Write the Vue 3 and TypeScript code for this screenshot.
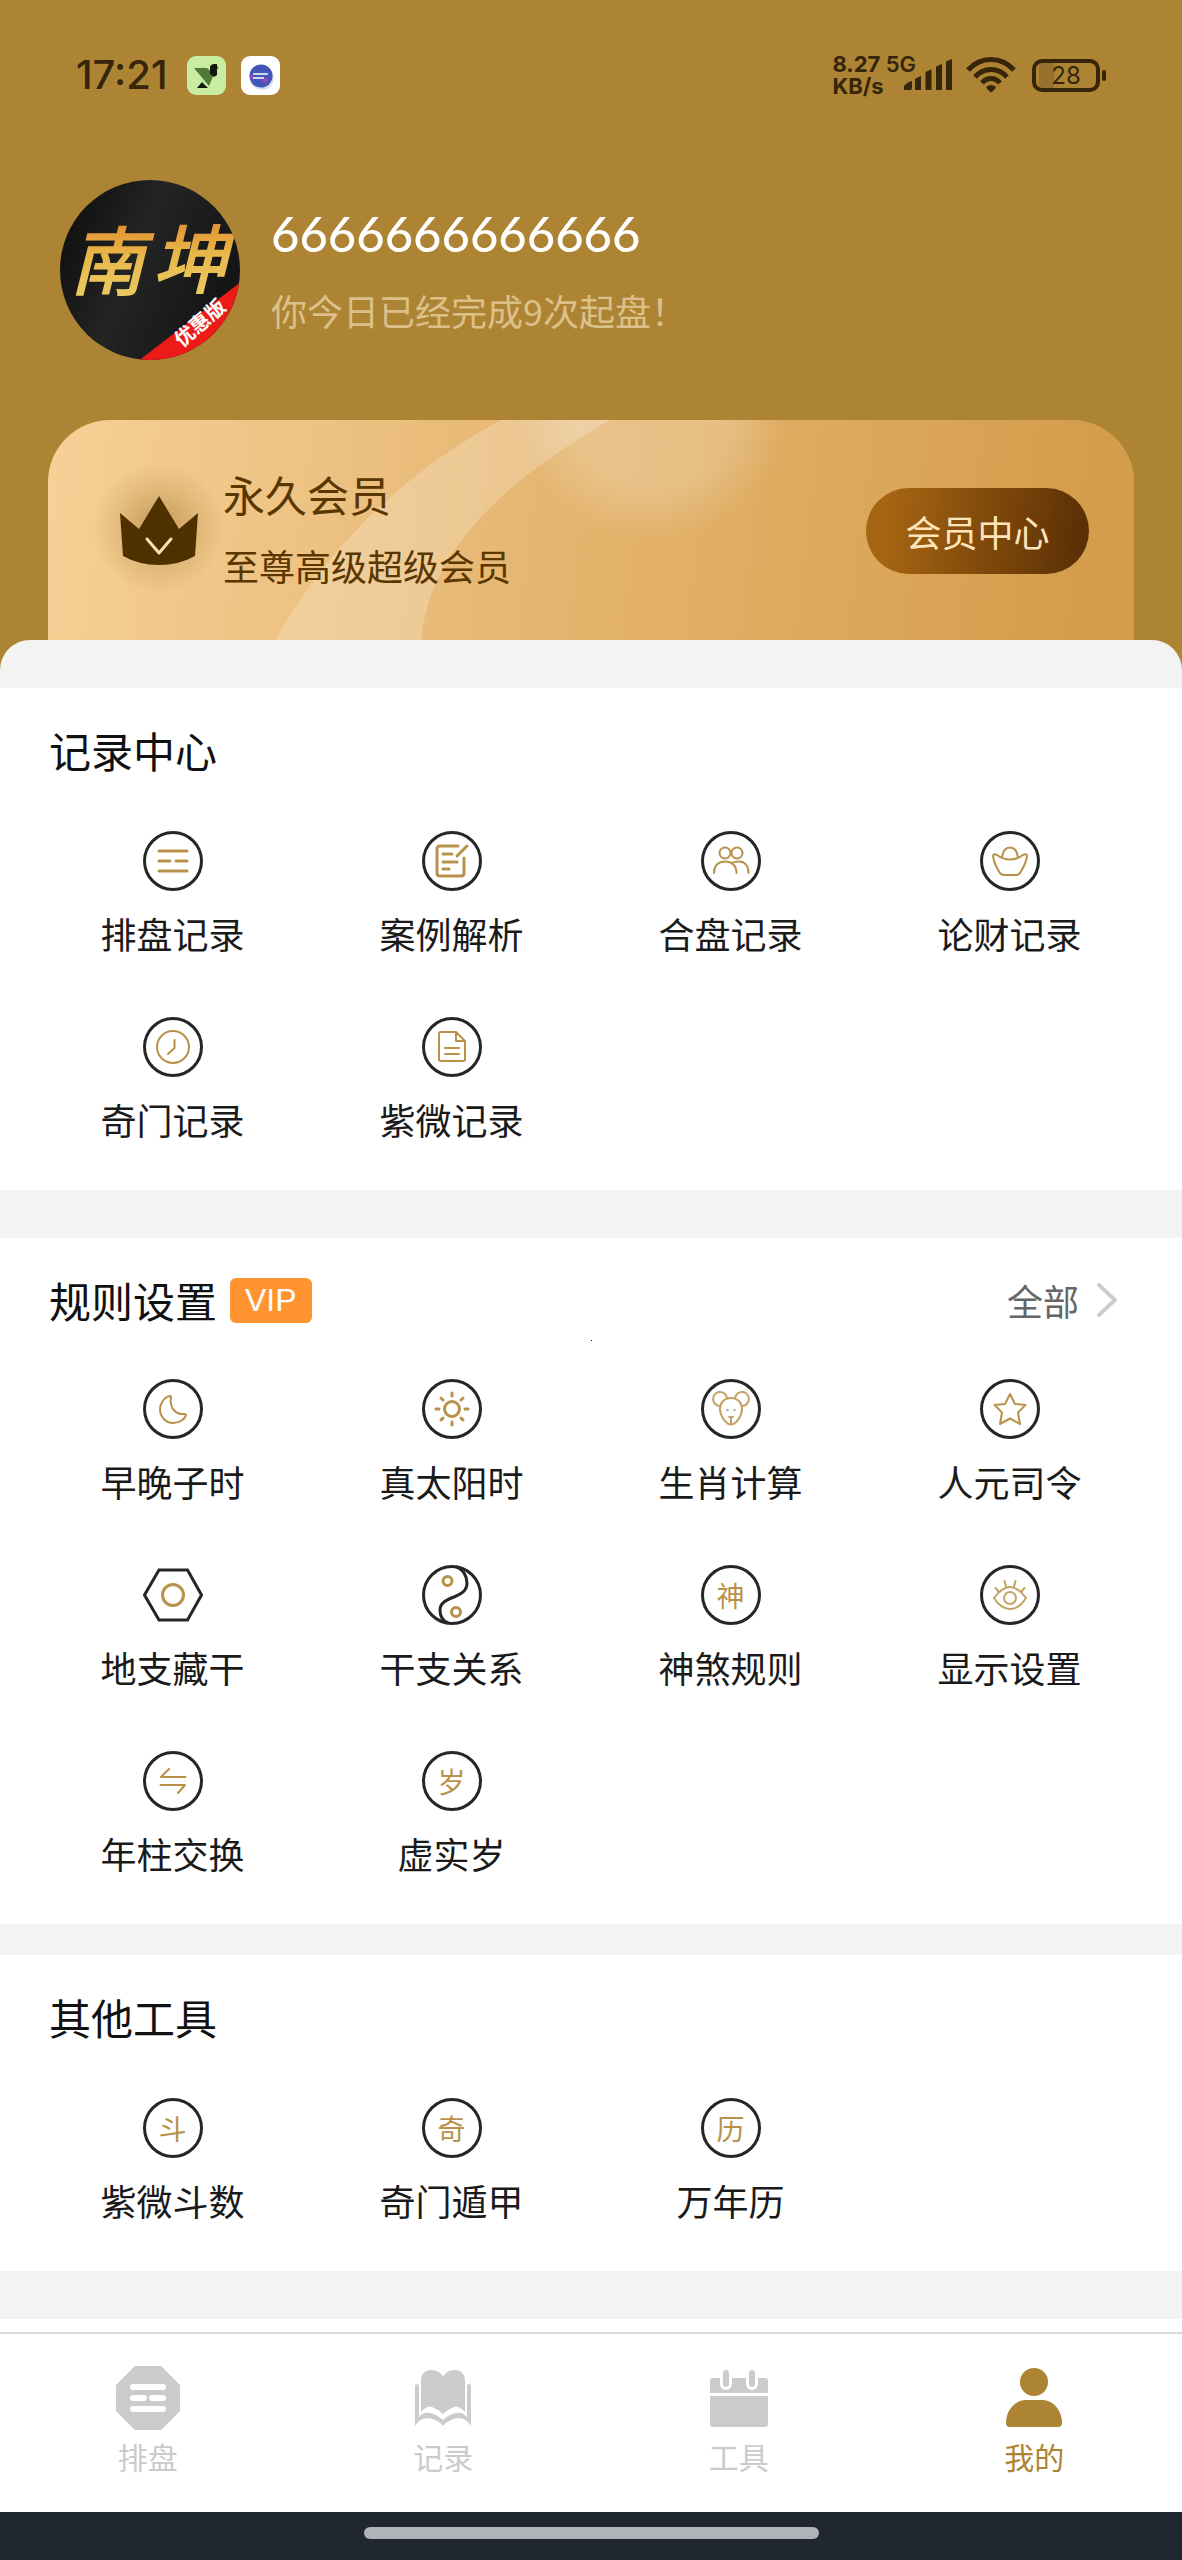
<script setup lang="ts">
interface Entry {
  label: string
  icon?: string
  glyph?: string
}

interface Section {
  title: string
  vip?: boolean
  entries: Entry[]
}

interface Tab {
  label: string
  active?: boolean
  shape: string
}

/* Icon artwork is drawn around the origin; g = gold strokes, k = dark strokes. */
const ring = '<circle class="k" r="28.5"/>'

const icons: Record<string, string> = {
  list: ring + '<path class="g" d="M-14-10H14M-14 0H-3M3 0H14M-14 10H14"/>',
  note:
    ring +
    '<path class="g" d="M6-15H-12Q-15-15-15-12V12Q-15 15-12 15H9Q12 15 12 12V-3M15-15 5-5M-9-7H0M-9 1H5M-9 8H-3"/>',
  people:
    ring +
    '<g class="g mid"><circle cx="-6" cy="-8" r="5.5"/><circle cx="6" cy="-8" r="5.5"/><path d="M-17 12C-17 4-12 .5-6 .5S5.500 4 5.500 12M0 2C3 1 5 .5 8 .5 14 .5 17.500 5 17.500 12"/></g>',
  ingot:
    ring +
    '<path class="g mid" d="M-8-4C-7-10-4-13.500 0-13.500S7-10 8-4M-17-5Q-17-8-13-6C-5 0 5 0 13-6Q17-8 17-5C16 2 12 9 10 12Q9 14 6 14H-6Q-9 14-10 12C-12 9-16 2-17-5Z"/>',
  clock: ring + '<g class="g mid"><circle r="16"/><path d="M1.500-7V1L-5 7"/></g>',
  doc:
    ring +
    '<path class="g mid" d="M4-15H-11Q-13-15-13-13V12Q-13 14-11 14H11Q13 14 13 12V-6ZM4-15V-6H13M-7 1H7M-7 7H7"/>',
  moon:
    ring +
    '<path class="g mid" d="M-3-13C-9-12-13-5-13 0-13 8-7 14 0 14 7 14 12 10 13 6Q13 5 11 5C3 6-4-1-2-12Q-2-13-3-13Z"/>',
  sun:
    ring +
    '<g class="g"><circle r="7.500"/><path d="M0-16V-13M0 16V13M-16 0H-13M16 0H13M-11-11-9-9M11-11 9-9M-11 11-9 9M11 11 9 9"/></g>',
  mouse:
    ring +
    '<g class="g thin"><path d="M-11-3A7 7 0 1 1-4-11M11-3A7 7 0 1 0 4-11M0-11C7-11 11-6 11 0 11 7 5 15.500 0 15.500S-11 7-11 0C-11-6-7-11 0-11ZM-2 8H2M0 8V15"/></g><circle class="eye" cx="-3.500" cy="1" r="1.300"/><circle class="eye" cx="3.500" cy="1" r="1.300"/>',
  star:
    ring +
    '<path class="g mid" d="M0-15 5-5 15.500-4 8 3.500 10 15 0 9.500-10 15-8 3.500-15.500-4-5-5Z"/>',
  hexagon:
    '<path class="k" d="M-14-25H14.500L28.500 0 14.500 25H-14L-28.500 0Z"/><circle class="g" r="10.500"/>',
  yinyang:
    ring +
    '<path class="k" d="M4-28C11-26 15-19 15-12 15-4 9-1 2 2-6 5-12 8-12 15-12 21-9 26-4 28"/><g class="g"><circle cx="-4.500" cy="-14" r="4.500"/><circle cx="4" cy="17" r="4.500"/></g>',
  eye:
    ring +
    '<g class="g thin"><path d="M-16 3C-10-5-5-8 0-8S10-5 16 3C11 11 5 14 0 14S-11 11-16 3ZM-14.500-7-11-3M-5.500-14-4-8.500M5.500-14 4-8.500M14.500-7 11-3"/><circle cy="3" r="6"/></g>',
  swap: ring + '<path class="g mid" d="M-4-12-12-4H12.500M-12.500 4H12L5 12"/>',
}

const sections: Section[] = [
  {
    title: '记录中心',
    entries: [
      { label: '排盘记录', icon: 'list' },
      { label: '案例解析', icon: 'note' },
      { label: '合盘记录', icon: 'people' },
      { label: '论财记录', icon: 'ingot' },
      { label: '奇门记录', icon: 'clock' },
      { label: '紫微记录', icon: 'doc' },
    ],
  },
  {
    title: '规则设置',
    vip: true,
    entries: [
      { label: '早晚子时', icon: 'moon' },
      { label: '真太阳时', icon: 'sun' },
      { label: '生肖计算', icon: 'mouse' },
      { label: '人元司令', icon: 'star' },
      { label: '地支藏干', icon: 'hexagon' },
      { label: '干支关系', icon: 'yinyang' },
      { label: '神煞规则', glyph: '神' },
      { label: '显示设置', icon: 'eye' },
      { label: '年柱交换', icon: 'swap' },
      { label: '虚实岁', glyph: '岁' },
    ],
  },
  {
    title: '其他工具',
    entries: [
      { label: '紫微斗数', glyph: '斗' },
      { label: '奇门遁甲', glyph: '奇' },
      { label: '万年历', glyph: '历' },
    ],
  },
]

const tabs: Tab[] = [
  {
    label: '排盘',
    shape:
      '<path d="M19 0H45L64 19V45L45 64H19L0 45V19Z"/><path class="cut" d="M17 21H47M17 32H28M36 32H47M17 43H47"/>',
  },
  {
    label: '记录',
    shape:
      '<path d="M10 15C10 8 14 4 20 4S30 7 32 11C34 7 38 4 44 4S54 8 54 15V46C50 41 46 40 43 41 38 43 34 46 32 48 30 46 26 43 21 41 18 40 14 41 10 46ZM4 20Q4 18 6 18T8 20V51C11 47 15 46 19 47 25 48 30 52 32 54 34 52 39 48 45 47 49 46 53 47 56 51V20Q56 18 58 18T60 20V60C57 55 53 52 47 52 40 53 35 56 32 60 29 56 24 53 17 52 11 52 7 55 4 60Z"/>',
  },
  {
    label: '工具',
    shape:
      '<path d="M6 12H58Q61 12 61 15V27H3V15Q3 12 6 12ZM3 30H61V58Q61 61 58 61H6Q3 61 3 58Z"/><path class="ring-gap" d="M19 8V18M45 8V18"/><path class="ring-bar" d="M19 7V18M45 7V18"/>',
  },
  {
    label: '我的',
    active: true,
    shape:
      '<circle cx="32" cy="16" r="14"/><path d="M4 57C4 44 13 34 24 34H40C51 34 60 44 60 57Q60 61 56 61H8Q4 61 4 57Z"/>',
  },
]
</script>

<template>
  <div class="page">
    <header class="hero">
      <div class="status">
        <div class="status-left">
          <span class="time">17:21</span>
          <svg class="app-badge" viewBox="0 0 39 39" aria-hidden="true">
            <rect width="39" height="39" rx="9" fill="#c9eda0" />
            <path d="M7 12H20L27 18 22 30Z" fill="#4f7a35" />
            <path d="M23 18V11Q24 8 27 8H30V10L32 13 30 12V19L27 21ZM10 32 15 26 21 32Z" fill="#10180c" />
          </svg>
          <svg class="app-badge" viewBox="0 0 39 39" aria-hidden="true">
            <rect width="39" height="39" rx="9" fill="#fff" />
            <circle cx="21" cy="22" r="12" fill="#dcdcf2" />
            <circle cx="20" cy="20" r="11.500" fill="#4355b8" />
            <circle cx="24" cy="24" r="2.500" fill="#a044b8" />
            <circle cx="11" cy="21" r="2" fill="#a044b8" />
            <path d="M12 18H27M12 22H23" stroke="#fff" stroke-width="1.500" />
          </svg>
        </div>
        <div class="status-right">
          <div class="speed"><span>8.27</span><span>KB/s</span></div>
          <span class="network">5G</span>
          <svg class="signal" viewBox="0 0 48 32" aria-hidden="true">
            <path d="M0 31V27Q3 23 8 22V29Q8 31 6 31ZM11 20Q14 18 17 17V31H11ZM21.500 13Q25 11 27.500 10.500V31H21.500ZM32 7.500Q35 6 38 5V31H32ZM42 2.500Q45 1 48 0V31H42Z" />
          </svg>
          <svg class="wifi" viewBox="0 0 50 36" aria-hidden="true">
            <path d="M2 13C15-1 35-1 48 13M9 20C18 10 32 10 41 20M16 26C21 20 29 20 34 26" />
            <path class="solid" d="M20 30Q25 26 30 30 28 34 25 35.500 22 34 20 30Z" />
          </svg>
          <div class="battery"><span>28</span></div>
        </div>
      </div>

      <div class="profile">
        <svg class="avatar" viewBox="0 0 180 180" role="img" aria-label="头像">
          <defs>
            <clipPath id="avatar-clip"><circle cx="90" cy="90" r="90" /></clipPath>
            <linearGradient id="avatar-bg" x1="0" y1="0" x2="1" y2="0.4">
              <stop offset="0" stop-color="#0b0b0b" />
              <stop offset="0.5" stop-color="#242424" />
              <stop offset="1" stop-color="#151515" />
            </linearGradient>
            <linearGradient id="avatar-gold" x1="0" y1="0" x2="0" y2="1">
              <stop offset="0.1" stop-color="#e08328" />
              <stop offset="0.5" stop-color="#e8b84a" />
              <stop offset="1" stop-color="#edd069" />
            </linearGradient>
          </defs>
          <g clip-path="url(#avatar-clip)">
            <rect width="180" height="180" fill="url(#avatar-bg)" />
            <text class="brush" x="10" y="109">南</text>
            <text class="brush" x="93" y="107">坤</text>
            <path d="M77 182 182 101V182Z" fill="#ee1a1a" />
            <text class="ribbon" transform="translate(122 168) rotate(-41)">优惠版</text>
          </g>
        </svg>
        <div class="who">
          <h1 class="name">6666666666666</h1>
          <p class="today">你今日已经完成9次起盘！</p>
        </div>
      </div>

      <div class="member">
        <svg class="member-art" viewBox="0 0 1086 250" preserveAspectRatio="xMinYMin slice" aria-hidden="true">
          <defs>
            <radialGradient id="glow">
              <stop offset="0.6" stop-color="#fff" stop-opacity="0.2" />
              <stop offset="1" stop-color="#fff" stop-opacity="0" />
            </radialGradient>
            <radialGradient id="crown-shade">
              <stop offset="0" stop-color="#7a5200" stop-opacity="0.4" />
              <stop offset="0.6" stop-color="#7a5200" stop-opacity="0.14" />
              <stop offset="1" stop-color="#7a5200" stop-opacity="0" />
            </radialGradient>
          </defs>
          <path d="M453 0C360 50 270 130 212 250H374C364 150 440 70 562 0Z" fill="#fff" fill-opacity="0.22" />
          <circle cx="604" cy="-14" r="136" fill="url(#glow)" />
          <circle cx="110" cy="108" r="66" fill="url(#crown-shade)" />
        </svg>
        <svg class="crown" viewBox="0 0 80 70" aria-hidden="true">
          <path d="M1 17 20 33 40 0 60 33 79 17 76 60Q60 69 40 69T4 60Z" fill="#4f3100" />
          <path d="M28 43 40 57 52 43" fill="none" stroke="#fbe0b0" stroke-width="3" stroke-linecap="round" stroke-linejoin="round" />
        </svg>
        <div class="member-text">
          <p class="level">永久会员</p>
          <p class="desc">至尊高级超级会员</p>
        </div>
        <button class="member-button" type="button">会员中心</button>
      </div>
    </header>

    <main class="sheet">
      <section v-for="section in sections" :key="section.title" class="block" :class="{ rules: section.vip }">
        <div class="head">
          <h2>{{ section.title }}</h2>
          <span v-if="section.vip" class="vip">VIP</span>
          <a v-if="section.vip" class="all" href="#">
            全部
            <svg viewBox="0 0 20 34" aria-hidden="true"><path d="M2 2 18 17 2 32" /></svg>
          </a>
          <i v-if="section.vip" class="speck"></i>
        </div>
        <div class="grid">
          <button v-for="entry in section.entries" :key="entry.label" class="entry" type="button">
            <svg v-if="entry.icon" class="entry-icon" viewBox="-30 -30 60 60" aria-hidden="true" v-html="icons[entry.icon]"></svg>
            <span v-else class="entry-icon seal">{{ entry.glyph }}</span>
            <span class="entry-label">{{ entry.label }}</span>
          </button>
        </div>
      </section>
      <div class="next"></div>
    </main>

    <footer class="bottom">
      <nav class="tabs">
        <a v-for="tab in tabs" :key="tab.label" href="#" class="tab" :class="{ active: tab.active }">
          <svg class="tab-icon" viewBox="0 0 64 64" aria-hidden="true" v-html="tab.shape"></svg>
          <span>{{ tab.label }}</span>
        </a>
      </nav>
      <div class="gesture"><span></span></div>
    </footer>
  </div>
</template>

<style>
body {
  margin: 0;
}
</style>

<style scoped>
.page {
  display: flex;
  flex-direction: column;
  min-height: 100vh;
  background: #fff;
  color: #1a1a1a;
  font-family: "Noto Sans CJK SC", sans-serif;
}

h1,
h2,
p {
  margin: 0;
  font-weight: 400;
}

button {
  padding: 0;
  border: 0;
  background: none;
  color: inherit;
  font-family: inherit;
}

a {
  color: inherit;
  text-decoration: none;
}

.hero {
  background: #ad8433;
}

.status {
  display: flex;
  align-items: center;
  justify-content: space-between;
  height: 150px;
  padding: 0 82px 0 76px;
  color: #36250a;
  font-family: Inter, sans-serif;
}

.status-left {
  display: flex;
  align-items: center;
}

.time {
  margin-right: 20px;
  font-size: 40px;
  font-weight: 500;
  line-height: 48px;
}

.app-badge {
  width: 39px;
  height: 39px;
  margin-right: 15px;
}

.status-right {
  display: flex;
  align-items: center;
}

.speed {
  display: flex;
  flex-direction: column;
  font-size: 22px;
  font-weight: 700;
  line-height: 22px;
}

.network {
  align-self: flex-start;
  margin-left: 2px;
  font-size: 22px;
  font-weight: 600;
  line-height: 22px;
}

.signal {
  width: 48px;
  height: 32px;
  margin-left: -12px;
  fill: #36250a;
}

.wifi {
  width: 50px;
  height: 36px;
  margin: 0 16px 0 14px;
  fill: none;
  stroke: #36250a;
  stroke-width: 5;
}

.wifi .solid {
  fill: #36250a;
  stroke: none;
}

.battery {
  position: relative;
  box-sizing: border-box;
  width: 68px;
  height: 33px;
  border: 4px solid #36250a;
  border-radius: 10px;
  background: linear-gradient(90deg, #ad8433 3px, #97712b 3px, #97712b 18px, #ad8433 18px);
  font-size: 24px;
  line-height: 25px;
  text-align: center;
}

.battery::after {
  content: "";
  position: absolute;
  top: 7px;
  right: -10px;
  width: 4px;
  height: 11px;
  border-radius: 2px;
  background: #36250a;
}

.profile {
  display: flex;
  align-items: center;
  gap: 31px;
  padding: 30px 60px 60px;
}

.avatar {
  flex: none;
  width: 180px;
  height: 180px;
}

.brush {
  fill: url(#avatar-gold);
  stroke: url(#avatar-gold);
  stroke-width: 2;
  font-size: 74px;
  font-style: italic;
}

.ribbon {
  fill: #fff;
  font-size: 20px;
  font-weight: 700;
}

.name {
  color: #fff;
  font-family: Lato, sans-serif;
  font-size: 49px;
  font-weight: 500;
  line-height: 60px;
}

.today {
  margin-top: 20px;
  color: #dcc08a;
  font-size: 36px;
  line-height: 54px;
}

.member {
  position: relative;
  display: flex;
  align-items: center;
  box-sizing: border-box;
  height: 250px;
  margin: 0 48px;
  padding: 0 45px 28px 71px;
  overflow: hidden;
  border-radius: 62px 62px 0 0;
  background: linear-gradient(97deg, #f6d097, #e3b26b 52%, #d49d4c 95%);
  color: #5a3600;
}

.member-art {
  position: absolute;
  inset: 0;
  width: 100%;
  height: 100%;
}

.crown {
  position: relative;
  width: 80px;
  height: 70px;
}

.member-text {
  position: relative;
  flex: 1;
  margin-left: 24px;
  margin-bottom: 6px;
}

.level {
  font-size: 42px;
  line-height: 60px;
}

.desc {
  margin-top: 14px;
  font-size: 36px;
  line-height: 54px;
}

.member-button {
  position: relative;
  width: 223px;
  height: 86px;
  border-radius: 43px;
  background: linear-gradient(97deg, #a66512 10%, #5c3005 95%);
  color: #fde5ba;
  font-size: 36px;
}

.sheet {
  position: relative;
  display: flex;
  flex: 1;
  flex-direction: column;
  gap: 48px;
  margin-top: -30px;
  padding-top: 48px;
  border-radius: 30px 30px 0 0;
  background: #f3f3f3;
}

.block {
  padding: 32px 33px 49px;
  background: #fff;
}

.rules {
  margin-bottom: -17px;
}

.head {
  position: relative;
  display: flex;
  align-items: center;
  height: 60px;
  margin-bottom: 51px;
  padding: 0 32px 0 16px;
}

.rules .head {
  margin-bottom: 49px;
}

.head h2 {
  color: #111;
  font-size: 42px;
  line-height: 60px;
}

.vip {
  margin-left: 13px;
  padding: 0 15px;
  border-radius: 6px;
  background: #ff9431;
  color: #fff;
  font-family: "Liberation Sans", sans-serif;
  font-size: 32px;
  line-height: 45px;
}

.all {
  display: flex;
  align-items: center;
  gap: 18px;
  margin-left: auto;
  color: #666;
  font-size: 36px;
  line-height: 54px;
}

.all svg {
  width: 20px;
  height: 34px;
  fill: none;
  stroke: #ccc;
  stroke-width: 4;
  stroke-linecap: round;
}

.speck {
  position: absolute;
  top: 70px;
  left: 50%;
  width: 1px;
  height: 1px;
  background: #111;
}

.grid {
  display: grid;
  grid-template-columns: repeat(4, 1fr);
  row-gap: 62px;
}

.entry {
  display: flex;
  flex-direction: column;
  align-items: center;
  gap: 20px;
}

.entry-icon {
  box-sizing: border-box;
  width: 60px;
  height: 60px;
}

.entry-icon :deep(.k) {
  fill: none;
  stroke: #262626;
  stroke-width: 3;
}

.entry-icon :deep(.g) {
  fill: none;
  stroke: #b8924a;
  stroke-width: 3;
  stroke-linecap: round;
  stroke-linejoin: round;
}

.entry-icon :deep(.mid) {
  stroke-width: 2;
}

.entry-icon :deep(.thin) {
  stroke-width: 2;
  stroke: #c4a265;
}

.entry-icon :deep(.eye) {
  fill: #aab0b8;
}

.seal {
  border: 3px solid #262626;
  border-radius: 50%;
  color: #b8924a;
  font-size: 28px;
  line-height: 54px;
  text-align: center;
}

.entry-label {
  font-size: 36px;
  line-height: 44px;
}

.next {
  flex: 1;
  min-height: 13px;
  background: #fff;
}

.bottom {
  position: sticky;
  bottom: 0;
}

.tabs {
  display: grid;
  grid-template-columns: repeat(4, 1fr);
  border-top: 2px solid #dadada;
  background: #fff;
}

.tab {
  display: flex;
  flex-direction: column;
  align-items: center;
  gap: 4px;
  padding: 32px 0 34px;
  color: #cbcbcb;
  font-size: 30px;
  line-height: 44px;
}

.tab.active {
  color: #ad8433;
}

.tab-icon {
  width: 64px;
  height: 64px;
  fill: currentColor;
}

.tab-icon :deep(.cut),
.tab-icon :deep(.ring-gap) {
  fill: none;
  stroke: #fff;
  stroke-width: 6;
  stroke-linecap: round;
}

.tab-icon :deep(.ring-gap) {
  stroke-width: 12;
}

.tab-icon :deep(.ring-bar) {
  fill: none;
  stroke: currentColor;
  stroke-width: 6;
  stroke-linecap: round;
}

.gesture {
  display: flex;
  align-items: center;
  justify-content: center;
  height: 48px;
  background: #212730;
}

.gesture span {
  width: 455px;
  height: 12px;
  margin-bottom: 7px;
  border-radius: 6px;
  background: #b0b4b9;
}
</style>
